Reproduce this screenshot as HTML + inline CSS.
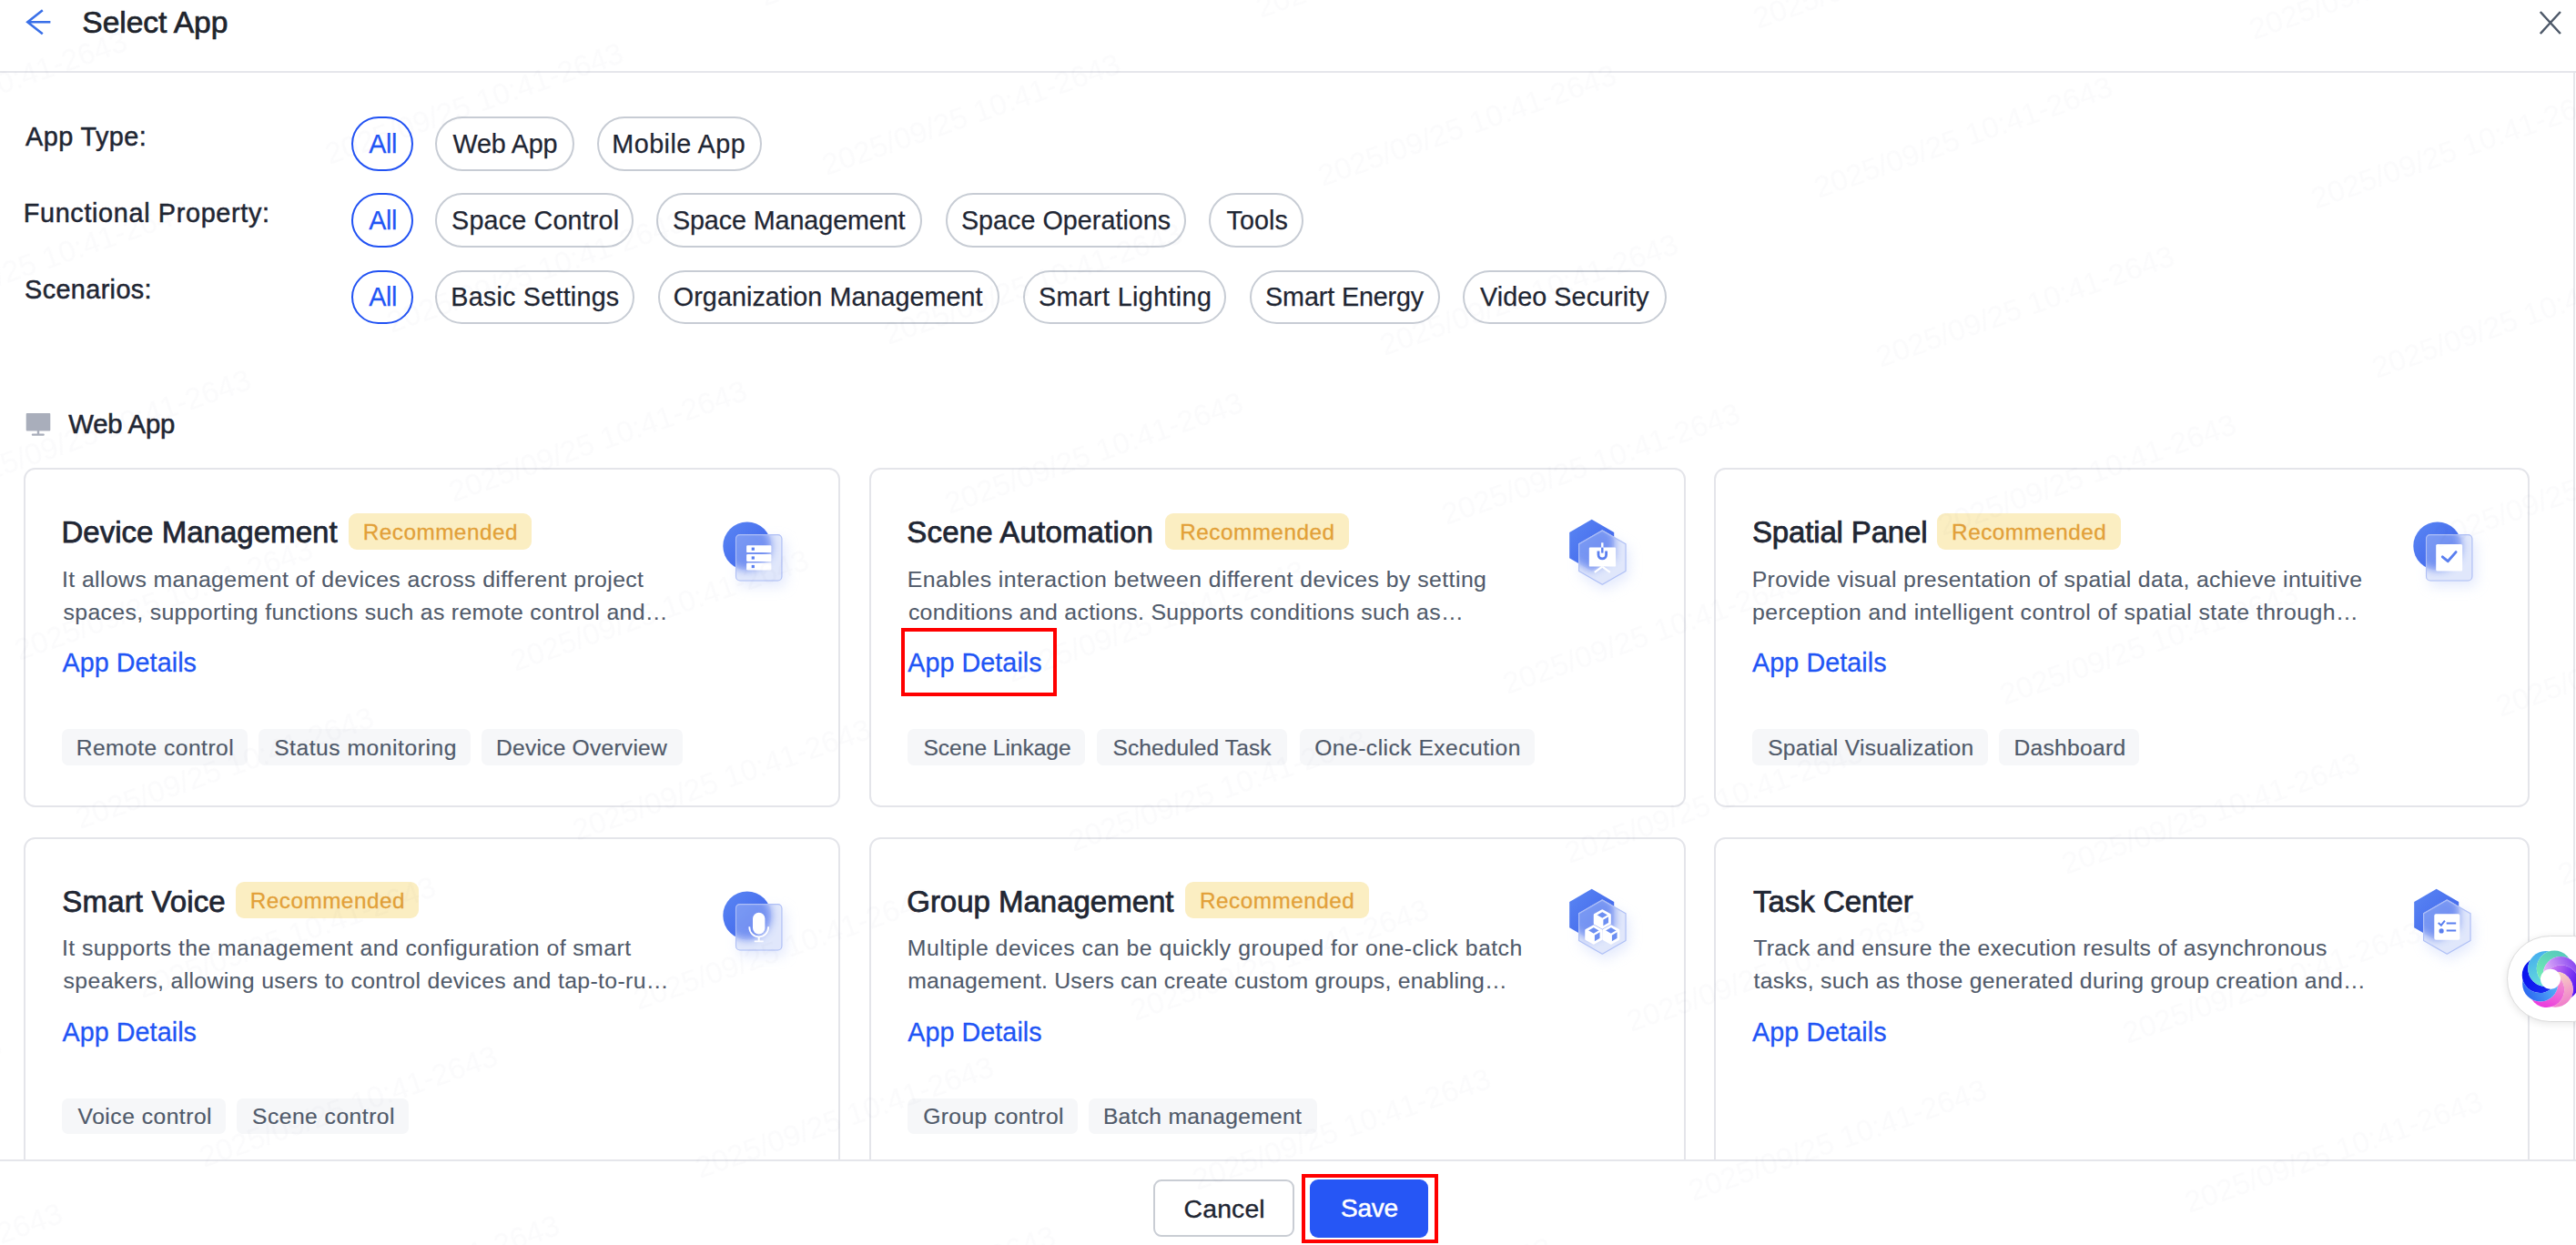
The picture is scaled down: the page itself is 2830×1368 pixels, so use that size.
<!DOCTYPE html><html><head><meta charset="utf-8"><title>Select App</title><style>
html,body{margin:0;padding:0;background:#fff;width:2830px;height:1368px;overflow:hidden;}
body{position:relative;font-family:"Liberation Sans",sans-serif;}
.t{position:absolute;white-space:nowrap;}
.abs{position:absolute;box-sizing:border-box;}
.pill{position:absolute;box-sizing:border-box;border:2px solid #c7ccd4;border-radius:30px;height:59.5px;}
.pill.on{border-color:#2152f3;}
.card{position:absolute;box-sizing:border-box;border:2px solid #e4e5ea;border-radius:12.5px;background:#fff;width:896.7px;height:373px;}
.tag{position:absolute;box-sizing:border-box;background:#f6f7f9;border-radius:7px;height:39.5px;}
.badge{position:absolute;box-sizing:border-box;background:#fbeec2;border-radius:9px;height:40px;}
</style></head><body>
<svg class="abs" style="left:0;top:0" width="80" height="50" viewBox="0 0 80 50"><path d="M46.8 11.2 L30.3 24.2 L46.8 37.2 M30.3 24.2 L55.4 24.2" fill="none" stroke="#3a70e8" stroke-width="2.6"/></svg>
<div class="t" style="left:90.35px;top:8.25px;font-size:33.6px;line-height:33.6px;letter-spacing:-0.055px;color:#20242c;-webkit-text-stroke:0.7px currentColor;">Select App</div>
<svg class="abs" style="left:2780px;top:0" width="50" height="50" viewBox="0 0 50 50"><path d="M10.8 13 L32.9 37 M32.9 13 L10.8 37" fill="none" stroke="#4e5969" stroke-width="2.5"/></svg>
<div class="abs" style="left:0;top:78px;width:2830px;height:2px;background:#e5e6eb"></div>
<div class="abs" style="left:2827px;top:80px;width:2px;height:1195px;background:#e6e7eb"></div>
<div class="t" style="left:28.00px;top:136.32px;font-size:28.8px;line-height:28.8px;letter-spacing:0.452px;color:#1f2633;-webkit-text-stroke:0.5px currentColor;">App Type:</div>
<div class="t" style="left:25.75px;top:219.92px;font-size:28.8px;line-height:28.8px;letter-spacing:0.659px;color:#1f2633;-webkit-text-stroke:0.5px currentColor;">Functional Property:</div>
<div class="t" style="left:27.10px;top:303.62px;font-size:28.8px;line-height:28.8px;letter-spacing:0.381px;color:#1f2633;-webkit-text-stroke:0.5px currentColor;">Scenarios:</div>
<div class="pill on" style="left:386.2px;top:128.3px;width:67.4px;"></div>
<div class="t" style="left:405.20px;top:143.70px;font-size:28.7px;line-height:28.7px;letter-spacing:-0.402px;color:#1f55f5;-webkit-text-stroke:0.25px currentColor;">All</div>
<div class="pill" style="left:478.2px;top:128.3px;width:153.1px;"></div>
<div class="t" style="left:497.50px;top:143.70px;font-size:28.7px;line-height:28.7px;letter-spacing:-0.145px;color:#1f2633;-webkit-text-stroke:0.25px currentColor;">Web App</div>
<div class="pill" style="left:656.2px;top:128.3px;width:180.8px;"></div>
<div class="t" style="left:672.36px;top:143.70px;font-size:28.7px;line-height:28.7px;letter-spacing:0.480px;color:#1f2633;-webkit-text-stroke:0.25px currentColor;">Mobile App</div>
<div class="pill on" style="left:386.2px;top:212.4px;width:67.4px;"></div>
<div class="t" style="left:405.20px;top:227.70px;font-size:28.7px;line-height:28.7px;letter-spacing:-0.402px;color:#1f55f5;-webkit-text-stroke:0.25px currentColor;">All</div>
<div class="pill" style="left:478.2px;top:212.4px;width:218.2px;"></div>
<div class="t" style="left:496.10px;top:227.70px;font-size:28.7px;line-height:28.7px;letter-spacing:0.185px;color:#1f2633;-webkit-text-stroke:0.25px currentColor;">Space Control</div>
<div class="pill" style="left:721.4px;top:212.4px;width:291.8px;"></div>
<div class="t" style="left:738.90px;top:227.70px;font-size:28.7px;line-height:28.7px;letter-spacing:-0.071px;color:#1f2633;-webkit-text-stroke:0.25px currentColor;">Space Management</div>
<div class="pill" style="left:1038.6px;top:212.4px;width:264.3px;"></div>
<div class="t" style="left:1055.90px;top:227.70px;font-size:28.7px;line-height:28.7px;letter-spacing:0.044px;color:#1f2633;-webkit-text-stroke:0.25px currentColor;">Space Operations</div>
<div class="pill" style="left:1328.3px;top:212.4px;width:104.0px;"></div>
<div class="t" style="left:1347.55px;top:227.70px;font-size:28.7px;line-height:28.7px;letter-spacing:0.086px;color:#1f2633;-webkit-text-stroke:0.25px currentColor;">Tools</div>
<div class="pill on" style="left:386.2px;top:296.5px;width:67.4px;"></div>
<div class="t" style="left:405.20px;top:311.80px;font-size:28.7px;line-height:28.7px;letter-spacing:-0.402px;color:#1f55f5;-webkit-text-stroke:0.25px currentColor;">All</div>
<div class="pill" style="left:478.2px;top:296.5px;width:219.1px;"></div>
<div class="t" style="left:495.26px;top:311.80px;font-size:28.7px;line-height:28.7px;letter-spacing:0.245px;color:#1f2633;-webkit-text-stroke:0.25px currentColor;">Basic Settings</div>
<div class="pill" style="left:722.8px;top:296.5px;width:374.9px;"></div>
<div class="t" style="left:739.85px;top:311.80px;font-size:28.7px;line-height:28.7px;letter-spacing:0.074px;color:#1f2633;-webkit-text-stroke:0.25px currentColor;">Organization Management</div>
<div class="pill" style="left:1123.7px;top:296.5px;width:223.4px;"></div>
<div class="t" style="left:1141.00px;top:311.80px;font-size:28.7px;line-height:28.7px;letter-spacing:0.374px;color:#1f2633;-webkit-text-stroke:0.25px currentColor;">Smart Lighting</div>
<div class="pill" style="left:1372.9px;top:296.5px;width:209.5px;"></div>
<div class="t" style="left:1390.10px;top:311.80px;font-size:28.7px;line-height:28.7px;letter-spacing:-0.114px;color:#1f2633;-webkit-text-stroke:0.25px currentColor;">Smart Energy</div>
<div class="pill" style="left:1607.1px;top:296.5px;width:223.8px;"></div>
<div class="t" style="left:1626.00px;top:311.80px;font-size:28.7px;line-height:28.7px;letter-spacing:0.090px;color:#1f2633;-webkit-text-stroke:0.25px currentColor;">Video Security</div>
<svg class="abs" style="left:28px;top:453px" width="30" height="28" viewBox="0 0 30 28"><rect x="0.7" y="1" width="26.6" height="19.6" rx="1" fill="#a9aebb"/><rect x="12.8" y="20" width="2.4" height="4.5" fill="#a9aebb"/><rect x="6.8" y="23.6" width="14" height="2.2" rx="1" fill="#a9aebb"/></svg>
<div class="t" style="left:75.30px;top:451.49px;font-size:29.3px;line-height:29.3px;letter-spacing:-0.234px;color:#1f2633;-webkit-text-stroke:0.55px currentColor;">Web App</div>
<div class="card" style="left:26.2px;top:514.0px"></div>
<div class="t" style="left:67.42px;top:568.06px;font-size:33.0px;line-height:33.0px;letter-spacing:0.032px;color:#1f2633;-webkit-text-stroke:0.75px currentColor;">Device Management</div>
<div class="badge" style="left:382.9px;top:563.8px;width:201.5px"></div>
<div class="t" style="left:398.70px;top:572.63px;font-size:24.3px;line-height:24.3px;letter-spacing:0.498px;color:#e2a038;-webkit-text-stroke:0.3px currentColor;">Recommended</div>
<div class="t" style="left:68.06px;top:624.60px;font-size:24.8px;line-height:24.8px;letter-spacing:0.399px;color:#505a6a;-webkit-text-stroke:0.1px currentColor;">It allows management of devices across different project</div>
<div class="t" style="left:69.61px;top:660.80px;font-size:24.8px;line-height:24.8px;letter-spacing:0.344px;color:#505a6a;-webkit-text-stroke:0.1px currentColor;">spaces, supporting functions such as remote control and…</div>
<div class="t" style="left:68.50px;top:714.10px;font-size:28.7px;line-height:28.7px;letter-spacing:0.073px;color:#1f55f5;-webkit-text-stroke:0.3px currentColor;">App Details</div>
<div class="tag" style="left:67.7px;top:801.0px;width:204.1px"></div>
<div class="t" style="left:83.68px;top:809.77px;font-size:24.6px;line-height:24.6px;letter-spacing:0.480px;color:#505a6a;-webkit-text-stroke:0.2px currentColor;">Remote control</div>
<div class="tag" style="left:284.0px;top:801.0px;width:232.7px"></div>
<div class="t" style="left:301.13px;top:809.77px;font-size:24.6px;line-height:24.6px;letter-spacing:0.551px;color:#505a6a;-webkit-text-stroke:0.2px currentColor;">Status monitoring</div>
<div class="tag" style="left:529.0px;top:801.0px;width:220.8px"></div>
<div class="t" style="left:544.98px;top:809.77px;font-size:24.6px;line-height:24.6px;letter-spacing:0.234px;color:#505a6a;-webkit-text-stroke:0.2px currentColor;">Device Overview</div>
<svg class="abs" style="left:766.2px;top:554.0px" width="130" height="110" viewBox="0 0 130 110"><defs>
<linearGradient id="bg0" x1="0" y1="0" x2="1" y2="1"><stop offset="0" stop-color="#5a86f3"/><stop offset="1" stop-color="#3b5fea"/></linearGradient>
<filter id="bl0" x="-50%" y="-50%" width="200%" height="200%"><feGaussianBlur stdDeviation="5"/></filter>
<filter id="gl0" x="-50%" y="-50%" width="200%" height="200%"><feGaussianBlur stdDeviation="7"/></filter>
</defs><rect x="46.0" y="39.1" width="51.4" height="51.4" rx="5" fill="#c9d6fb" opacity="0.5" filter="url(#gl0)"/><circle cx="54.8" cy="46.0" r="26.5" fill="url(#bg0)"/><clipPath id="cp0"><rect x="42.0" y="33.1" width="51.4" height="51.4" rx="5"/></clipPath><rect x="42.0" y="33.1" width="51.4" height="51.4" rx="5" fill="#dfe6fb" fill-opacity="0.92"/><g clip-path="url(#cp0)"><g filter="url(#bl0)" opacity="0.68"><circle cx="54.8" cy="46.0" r="26.5" fill="url(#bg0)"/></g></g><rect x="42.5" y="33.6" width="50.4" height="50.4" rx="4.5" fill="none" stroke="#aebff6" stroke-width="1.1"/><rect x="54.1" y="45.2" width="27.3" height="7.9" rx="1.2" fill="#ffffff"/><rect x="59.7" y="47.6" width="3.2" height="3.2" fill="#5a7ff0"/><rect x="54.1" y="55.0" width="27.3" height="7.9" rx="1.2" fill="#ffffff"/><rect x="59.7" y="57.4" width="3.2" height="3.2" fill="#5a7ff0"/><rect x="54.1" y="64.5" width="27.3" height="7.9" rx="1.2" fill="#ffffff"/><rect x="59.7" y="66.9" width="3.2" height="3.2" fill="#5a7ff0"/></svg>
<div class="card" style="left:954.9px;top:514.0px"></div>
<div class="t" style="left:996.37px;top:568.06px;font-size:33.0px;line-height:33.0px;letter-spacing:0.174px;color:#1f2633;-webkit-text-stroke:0.75px currentColor;">Scene Automation</div>
<div class="badge" style="left:1280.4px;top:563.8px;width:201.5px"></div>
<div class="t" style="left:1296.20px;top:572.63px;font-size:24.3px;line-height:24.3px;letter-spacing:0.498px;color:#e2a038;-webkit-text-stroke:0.3px currentColor;">Recommended</div>
<div class="t" style="left:996.76px;top:624.60px;font-size:24.8px;line-height:24.8px;letter-spacing:0.447px;color:#505a6a;-webkit-text-stroke:0.1px currentColor;">Enables interaction between different devices by setting</div>
<div class="t" style="left:997.92px;top:660.80px;font-size:24.8px;line-height:24.8px;letter-spacing:0.308px;color:#505a6a;-webkit-text-stroke:0.1px currentColor;">conditions and actions. Supports conditions such as…</div>
<div class="t" style="left:997.20px;top:714.10px;font-size:28.7px;line-height:28.7px;letter-spacing:0.073px;color:#1f55f5;-webkit-text-stroke:0.3px currentColor;">App Details</div>
<div class="tag" style="left:997.4px;top:801.0px;width:195.0px"></div>
<div class="t" style="left:1014.53px;top:809.77px;font-size:24.6px;line-height:24.6px;letter-spacing:-0.049px;color:#505a6a;-webkit-text-stroke:0.2px currentColor;">Scene Linkage</div>
<div class="tag" style="left:1205.3px;top:801.0px;width:208.9px"></div>
<div class="t" style="left:1222.43px;top:809.77px;font-size:24.6px;line-height:24.6px;letter-spacing:0.077px;color:#505a6a;-webkit-text-stroke:0.2px currentColor;">Scheduled Task</div>
<div class="tag" style="left:1427.5px;top:801.0px;width:258.2px"></div>
<div class="t" style="left:1444.25px;top:809.77px;font-size:24.6px;line-height:24.6px;letter-spacing:0.486px;color:#505a6a;-webkit-text-stroke:0.2px currentColor;">One-click Execution</div>
<svg class="abs" style="left:1694.9px;top:554.0px" width="130" height="110" viewBox="0 0 130 110"><defs>
<linearGradient id="bg1" x1="0" y1="0" x2="1" y2="1"><stop offset="0" stop-color="#5a86f3"/><stop offset="1" stop-color="#3b5fea"/></linearGradient>
<filter id="bl1" x="-50%" y="-50%" width="200%" height="200%"><feGaussianBlur stdDeviation="5"/></filter>
<filter id="gl1" x="-50%" y="-50%" width="200%" height="200%"><feGaussianBlur stdDeviation="7"/></filter>
</defs><polygon points="68.30,34.40 94.45,49.50 94.45,79.70 68.30,94.80 42.15,79.70 42.15,49.50" fill="#c9d6fb" opacity="0.5" filter="url(#gl1)"/><polygon points="53.70,16.80 78.21,30.95 78.21,59.25 53.70,73.40 29.19,59.25 29.19,30.95" fill="url(#bg1)"/><clipPath id="cp1"><polygon points="65.30,28.40 91.45,43.50 91.45,73.70 65.30,88.80 39.15,73.70 39.15,43.50"/></clipPath><polygon points="65.30,29.40 90.59,44.00 90.59,73.20 65.30,87.80 40.01,73.20 40.01,44.00" fill="#dfe6fb" fill-opacity="0.92" stroke="#dfe6fb" stroke-opacity="0.92" stroke-width="2" stroke-linejoin="round"/><g clip-path="url(#cp1)"><g filter="url(#bl1)" opacity="0.68"><polygon points="53.70,16.80 78.21,30.95 78.21,59.25 53.70,73.40 29.19,59.25 29.19,30.95" fill="url(#bg1)"/></g></g><polygon points="65.30,28.90 91.02,43.75 91.02,73.45 65.30,88.30 39.58,73.45 39.58,43.75" fill="none" stroke="#aebff6" stroke-width="1.1" stroke-linejoin="round"/><rect x="50.8" y="47.6" width="29.3" height="21" rx="1.2" fill="#ffffff"/><rect x="64.1" y="42.3" width="2.4" height="6" fill="#ffffff"/><path d="M61.0 51.6 V55.6 A4.3 4.3 0 0 0 69.6 55.6 V51.6" fill="none" stroke="#5a7ff0" stroke-width="2.8"/><rect x="64.1" y="47.6" width="2.4" height="6" fill="#5a7ff0"/><path d="M65.3 68.6 L56.8 74.9 M65.3 68.6 L73.8 74.9" fill="none" stroke="#ffffff" stroke-width="2.2"/></svg>
<div class="card" style="left:1882.8px;top:514.0px"></div>
<div class="t" style="left:1924.97px;top:568.06px;font-size:33.0px;line-height:33.0px;letter-spacing:-0.155px;color:#1f2633;-webkit-text-stroke:0.75px currentColor;">Spatial Panel</div>
<div class="badge" style="left:2128.3px;top:563.8px;width:201.5px"></div>
<div class="t" style="left:2144.10px;top:572.63px;font-size:24.3px;line-height:24.3px;letter-spacing:0.498px;color:#e2a038;-webkit-text-stroke:0.3px currentColor;">Recommended</div>
<div class="t" style="left:1924.66px;top:624.60px;font-size:24.8px;line-height:24.8px;letter-spacing:0.345px;color:#505a6a;-webkit-text-stroke:0.1px currentColor;">Provide visual presentation of spatial data, achieve intuitive</div>
<div class="t" style="left:1925.05px;top:660.80px;font-size:24.8px;line-height:24.8px;letter-spacing:0.443px;color:#505a6a;-webkit-text-stroke:0.1px currentColor;">perception and intelligent control of spatial state through…</div>
<div class="t" style="left:1925.10px;top:714.10px;font-size:28.7px;line-height:28.7px;letter-spacing:0.073px;color:#1f55f5;-webkit-text-stroke:0.3px currentColor;">App Details</div>
<div class="tag" style="left:1925.0px;top:801.0px;width:258.5px"></div>
<div class="t" style="left:1942.13px;top:809.77px;font-size:24.6px;line-height:24.6px;letter-spacing:0.317px;color:#505a6a;-webkit-text-stroke:0.2px currentColor;">Spatial Visualization</div>
<div class="tag" style="left:2196.4px;top:801.0px;width:154.1px"></div>
<div class="t" style="left:2212.38px;top:809.77px;font-size:24.6px;line-height:24.6px;letter-spacing:0.307px;color:#505a6a;-webkit-text-stroke:0.2px currentColor;">Dashboard</div>
<svg class="abs" style="left:2622.8px;top:554.0px" width="130" height="110" viewBox="0 0 130 110"><defs>
<linearGradient id="bg2" x1="0" y1="0" x2="1" y2="1"><stop offset="0" stop-color="#5a86f3"/><stop offset="1" stop-color="#3b5fea"/></linearGradient>
<filter id="bl2" x="-50%" y="-50%" width="200%" height="200%"><feGaussianBlur stdDeviation="5"/></filter>
<filter id="gl2" x="-50%" y="-50%" width="200%" height="200%"><feGaussianBlur stdDeviation="7"/></filter>
</defs><rect x="46.0" y="39.1" width="51.4" height="51.4" rx="5" fill="#c9d6fb" opacity="0.5" filter="url(#gl2)"/><circle cx="54.8" cy="46.0" r="26.5" fill="url(#bg2)"/><clipPath id="cp2"><rect x="42.0" y="33.1" width="51.4" height="51.4" rx="5"/></clipPath><rect x="42.0" y="33.1" width="51.4" height="51.4" rx="5" fill="#dfe6fb" fill-opacity="0.92"/><g clip-path="url(#cp2)"><g filter="url(#bl2)" opacity="0.68"><circle cx="54.8" cy="46.0" r="26.5" fill="url(#bg2)"/></g></g><rect x="42.5" y="33.6" width="50.4" height="50.4" rx="4.5" fill="none" stroke="#aebff6" stroke-width="1.1"/><rect x="53.2" y="44.1" width="29" height="29.3" rx="1.5" fill="#ffffff"/><path d="M60.3 57.9 L66.2 62.7 L75.1 52.6" fill="none" stroke="#5a7ff0" stroke-width="2.9" stroke-linecap="round" stroke-linejoin="round"/></svg>
<div class="card" style="left:26.2px;top:919.5px"></div>
<div class="t" style="left:68.37px;top:973.56px;font-size:33.0px;line-height:33.0px;letter-spacing:0.146px;color:#1f2633;-webkit-text-stroke:0.75px currentColor;">Smart Voice</div>
<div class="badge" style="left:258.9px;top:969.3px;width:201.5px"></div>
<div class="t" style="left:274.70px;top:978.13px;font-size:24.3px;line-height:24.3px;letter-spacing:0.498px;color:#e2a038;-webkit-text-stroke:0.3px currentColor;">Recommended</div>
<div class="t" style="left:68.06px;top:1030.10px;font-size:24.8px;line-height:24.8px;letter-spacing:0.435px;color:#505a6a;-webkit-text-stroke:0.1px currentColor;">It supports the management and configuration of smart</div>
<div class="t" style="left:69.61px;top:1066.30px;font-size:24.8px;line-height:24.8px;letter-spacing:0.350px;color:#505a6a;-webkit-text-stroke:0.1px currentColor;">speakers, allowing users to control devices and tap-to-ru…</div>
<div class="t" style="left:68.50px;top:1119.60px;font-size:28.7px;line-height:28.7px;letter-spacing:0.073px;color:#1f55f5;-webkit-text-stroke:0.3px currentColor;">App Details</div>
<div class="tag" style="left:67.7px;top:1206.5px;width:180.0px"></div>
<div class="t" style="left:85.60px;top:1215.27px;font-size:24.6px;line-height:24.6px;letter-spacing:0.514px;color:#505a6a;-webkit-text-stroke:0.2px currentColor;">Voice control</div>
<div class="tag" style="left:259.9px;top:1206.5px;width:188.7px"></div>
<div class="t" style="left:277.03px;top:1215.27px;font-size:24.6px;line-height:24.6px;letter-spacing:0.506px;color:#505a6a;-webkit-text-stroke:0.2px currentColor;">Scene control</div>
<svg class="abs" style="left:766.2px;top:959.5px" width="130" height="110" viewBox="0 0 130 110"><defs>
<linearGradient id="bg3" x1="0" y1="0" x2="1" y2="1"><stop offset="0" stop-color="#5a86f3"/><stop offset="1" stop-color="#3b5fea"/></linearGradient>
<filter id="bl3" x="-50%" y="-50%" width="200%" height="200%"><feGaussianBlur stdDeviation="5"/></filter>
<filter id="gl3" x="-50%" y="-50%" width="200%" height="200%"><feGaussianBlur stdDeviation="7"/></filter>
</defs><rect x="46.0" y="39.1" width="51.4" height="51.4" rx="5" fill="#c9d6fb" opacity="0.5" filter="url(#gl3)"/><circle cx="54.8" cy="46.0" r="26.5" fill="url(#bg3)"/><clipPath id="cp3"><rect x="42.0" y="33.1" width="51.4" height="51.4" rx="5"/></clipPath><rect x="42.0" y="33.1" width="51.4" height="51.4" rx="5" fill="#dfe6fb" fill-opacity="0.92"/><g clip-path="url(#cp3)"><g filter="url(#bl3)" opacity="0.68"><circle cx="54.8" cy="46.0" r="26.5" fill="url(#bg3)"/></g></g><rect x="42.5" y="33.6" width="50.4" height="50.4" rx="4.5" fill="none" stroke="#aebff6" stroke-width="1.1"/><rect x="61.0" y="42.7" width="13.4" height="23.7" rx="6.7" fill="#ffffff"/><path d="M57.3 58.2 V59.1 A10.4 10.4 0 0 0 78.1 59.1 V58.2" fill="none" stroke="#ffffff" stroke-width="1.8"/><path d="M67.7 69.4 V74.3 M62.7 74.4 H72.7" fill="none" stroke="#ffffff" stroke-width="1.9"/></svg>
<div class="card" style="left:954.9px;top:919.5px"></div>
<div class="t" style="left:996.25px;top:973.56px;font-size:33.0px;line-height:33.0px;letter-spacing:-0.018px;color:#1f2633;-webkit-text-stroke:0.75px currentColor;">Group Management</div>
<div class="badge" style="left:1302.2px;top:969.3px;width:201.5px"></div>
<div class="t" style="left:1318.00px;top:978.13px;font-size:24.3px;line-height:24.3px;letter-spacing:0.498px;color:#e2a038;-webkit-text-stroke:0.3px currentColor;">Recommended</div>
<div class="t" style="left:996.76px;top:1030.10px;font-size:24.8px;line-height:24.8px;letter-spacing:0.502px;color:#505a6a;-webkit-text-stroke:0.1px currentColor;">Multiple devices can be quickly grouped for one-click batch</div>
<div class="t" style="left:997.15px;top:1066.30px;font-size:24.8px;line-height:24.8px;letter-spacing:0.211px;color:#505a6a;-webkit-text-stroke:0.1px currentColor;">management. Users can create custom groups, enabling…</div>
<div class="t" style="left:997.20px;top:1119.60px;font-size:28.7px;line-height:28.7px;letter-spacing:0.073px;color:#1f55f5;-webkit-text-stroke:0.3px currentColor;">App Details</div>
<div class="tag" style="left:997.4px;top:1206.5px;width:186.2px"></div>
<div class="t" style="left:1014.15px;top:1215.27px;font-size:24.6px;line-height:24.6px;letter-spacing:0.444px;color:#505a6a;-webkit-text-stroke:0.2px currentColor;">Group control</div>
<div class="tag" style="left:1195.9px;top:1206.5px;width:250.8px"></div>
<div class="t" style="left:1211.88px;top:1215.27px;font-size:24.6px;line-height:24.6px;letter-spacing:0.314px;color:#505a6a;-webkit-text-stroke:0.2px currentColor;">Batch management</div>
<svg class="abs" style="left:1694.9px;top:959.5px" width="130" height="110" viewBox="0 0 130 110"><defs>
<linearGradient id="bg4" x1="0" y1="0" x2="1" y2="1"><stop offset="0" stop-color="#5a86f3"/><stop offset="1" stop-color="#3b5fea"/></linearGradient>
<filter id="bl4" x="-50%" y="-50%" width="200%" height="200%"><feGaussianBlur stdDeviation="5"/></filter>
<filter id="gl4" x="-50%" y="-50%" width="200%" height="200%"><feGaussianBlur stdDeviation="7"/></filter>
</defs><polygon points="68.30,34.40 94.45,49.50 94.45,79.70 68.30,94.80 42.15,79.70 42.15,49.50" fill="#c9d6fb" opacity="0.5" filter="url(#gl4)"/><polygon points="53.70,16.80 78.21,30.95 78.21,59.25 53.70,73.40 29.19,59.25 29.19,30.95" fill="url(#bg4)"/><clipPath id="cp4"><polygon points="65.30,28.40 91.45,43.50 91.45,73.70 65.30,88.80 39.15,73.70 39.15,43.50"/></clipPath><polygon points="65.30,29.40 90.59,44.00 90.59,73.20 65.30,87.80 40.01,73.20 40.01,44.00" fill="#dfe6fb" fill-opacity="0.92" stroke="#dfe6fb" stroke-opacity="0.92" stroke-width="2" stroke-linejoin="round"/><g clip-path="url(#cp4)"><g filter="url(#bl4)" opacity="0.68"><polygon points="53.70,16.80 78.21,30.95 78.21,59.25 53.70,73.40 29.19,59.25 29.19,30.95" fill="url(#bg4)"/></g></g><polygon points="65.30,28.90 91.02,43.75 91.02,73.45 65.30,88.30 39.58,73.45 39.58,43.75" fill="none" stroke="#aebff6" stroke-width="1.1" stroke-linejoin="round"/><polygon points="65.30,40.60 73.44,45.30 73.44,54.70 65.30,59.40 57.16,54.70 57.16,45.30" fill="#6d8ff2" stroke="#ffffff" stroke-width="2.8" stroke-linejoin="round"/><polygon points="57.2,45.3 65.3,50.0 65.3,59.4 57.2,54.7" fill="#ffffff"/><path d="M57.2 45.3 L65.3 50.0 L73.4 45.3 M65.3 50.0 V59.4" fill="none" stroke="#ffffff" stroke-width="2.2"/><polygon points="55.80,57.60 63.94,62.30 63.94,71.70 55.80,76.40 47.66,71.70 47.66,62.30" fill="#6d8ff2" stroke="#ffffff" stroke-width="2.8" stroke-linejoin="round"/><polygon points="47.7,62.3 55.8,67.0 55.8,76.4 47.7,71.7" fill="#ffffff"/><path d="M47.7 62.3 L55.8 67.0 L63.9 62.3 M55.8 67.0 V76.4" fill="none" stroke="#ffffff" stroke-width="2.2"/><polygon points="74.80,57.60 82.94,62.30 82.94,71.70 74.80,76.40 66.66,71.70 66.66,62.30" fill="#6d8ff2" stroke="#ffffff" stroke-width="2.8" stroke-linejoin="round"/><polygon points="66.7,62.3 74.8,67.0 74.8,76.4 66.7,71.7" fill="#ffffff"/><path d="M66.7 62.3 L74.8 67.0 L82.9 62.3 M74.8 67.0 V76.4" fill="none" stroke="#ffffff" stroke-width="2.2"/></svg>
<div class="card" style="left:1882.8px;top:919.5px"></div>
<div class="t" style="left:1926.08px;top:973.56px;font-size:33.0px;line-height:33.0px;letter-spacing:-0.029px;color:#1f2633;-webkit-text-stroke:0.75px currentColor;">Task Center</div>
<div class="t" style="left:1926.21px;top:1030.10px;font-size:24.8px;line-height:24.8px;letter-spacing:0.281px;color:#505a6a;-webkit-text-stroke:0.1px currentColor;">Track and ensure the execution results of asynchronous</div>
<div class="t" style="left:1926.60px;top:1066.30px;font-size:24.8px;line-height:24.8px;letter-spacing:0.262px;color:#505a6a;-webkit-text-stroke:0.1px currentColor;">tasks, such as those generated during group creation and…</div>
<div class="t" style="left:1925.10px;top:1119.60px;font-size:28.7px;line-height:28.7px;letter-spacing:0.073px;color:#1f55f5;-webkit-text-stroke:0.3px currentColor;">App Details</div>
<svg class="abs" style="left:2622.8px;top:959.5px" width="130" height="110" viewBox="0 0 130 110"><defs>
<linearGradient id="bg5" x1="0" y1="0" x2="1" y2="1"><stop offset="0" stop-color="#5a86f3"/><stop offset="1" stop-color="#3b5fea"/></linearGradient>
<filter id="bl5" x="-50%" y="-50%" width="200%" height="200%"><feGaussianBlur stdDeviation="5"/></filter>
<filter id="gl5" x="-50%" y="-50%" width="200%" height="200%"><feGaussianBlur stdDeviation="7"/></filter>
</defs><polygon points="68.30,34.40 94.45,49.50 94.45,79.70 68.30,94.80 42.15,79.70 42.15,49.50" fill="#c9d6fb" opacity="0.5" filter="url(#gl5)"/><polygon points="53.70,16.80 78.21,30.95 78.21,59.25 53.70,73.40 29.19,59.25 29.19,30.95" fill="url(#bg5)"/><clipPath id="cp5"><polygon points="65.30,28.40 91.45,43.50 91.45,73.70 65.30,88.80 39.15,73.70 39.15,43.50"/></clipPath><polygon points="65.30,29.40 90.59,44.00 90.59,73.20 65.30,87.80 40.01,73.20 40.01,44.00" fill="#dfe6fb" fill-opacity="0.92" stroke="#dfe6fb" stroke-opacity="0.92" stroke-width="2" stroke-linejoin="round"/><g clip-path="url(#cp5)"><g filter="url(#bl5)" opacity="0.68"><polygon points="53.70,16.80 78.21,30.95 78.21,59.25 53.70,73.40 29.19,59.25 29.19,30.95" fill="url(#bg5)"/></g></g><polygon points="65.30,28.90 91.02,43.75 91.02,73.45 65.30,88.30 39.58,73.45 39.58,43.75" fill="none" stroke="#aebff6" stroke-width="1.1" stroke-linejoin="round"/><rect x="51.3" y="44.3" width="28.1" height="28.4" rx="1.8" fill="#ffffff"/><path d="M55.7 54.0 L58.9 56.7 L62.9 51.7" fill="none" stroke="#5a7ff0" stroke-width="2"/><rect x="64.7" y="53.5" width="10.5" height="2" fill="#5a7ff0"/><circle cx="59.1" cy="62.9" r="2.6" fill="#5a7ff0"/><rect x="64.7" y="61.5" width="10.5" height="2" fill="#5a7ff0"/></svg>
<div class="abs" style="left:0;top:1274px;width:2830px;height:94px;background:#fff"></div>
<div class="abs" style="left:0;top:1274px;width:2830px;height:2px;background:#e5e6eb"></div>
<div class="abs" style="left:1267.2px;top:1296.1px;width:155.2px;height:63.2px;border:2px solid #c9cdd4;border-radius:9px;background:#fff"></div>
<div class="t" style="left:1300.57px;top:1313.95px;font-size:28.4px;line-height:28.4px;letter-spacing:0.140px;color:#1f2633;-webkit-text-stroke:0.35px currentColor;">Cancel</div>
<div class="abs" style="left:1438.7px;top:1295.8px;width:130.4px;height:63.9px;border-radius:9px;background:#2656f5"></div>
<div class="t" style="left:1473.12px;top:1314.29px;font-size:28.0px;line-height:28.0px;letter-spacing:-0.304px;color:#ffffff;-webkit-text-stroke:0.5px currentColor;">Save</div>
<div class="abs" style="left:1430px;top:1289.8px;width:149.6px;height:75.9px;border:4px solid #ff0000"></div>
<div class="abs" style="left:990px;top:690px;width:171.1px;height:75.3px;border:4px solid #ff0000"></div>
<div class="abs" style="left:2753.6px;top:1027.8px;width:120px;height:95.6px;border-radius:48px;background:#fff;border:1px solid #dcdcdc;box-shadow:0 2px 9px rgba(0,0,0,0.10)"></div>
<svg class="abs" style="left:2762px;top:1036px" width="68" height="80" viewBox="0 0 68 80"><defs><linearGradient id="pg0" gradientUnits="userSpaceOnUse" x1="47.5" y1="42.5" x2="9.9" y2="28.9"><stop offset="0" stop-color="#1a2ff2"/><stop offset="1" stop-color="#0a12ee"/></linearGradient><linearGradient id="pg1" gradientUnits="userSpaceOnUse" x1="43.4" y1="47.1" x2="26.5" y2="10.8"><stop offset="0" stop-color="#6ae6d6"/><stop offset="1" stop-color="#48b0ee"/></linearGradient><linearGradient id="pg2" gradientUnits="userSpaceOnUse" x1="37.3" y1="47.3" x2="50.9" y2="9.7"><stop offset="0" stop-color="#78f4b4"/><stop offset="1" stop-color="#58cabc"/></linearGradient><linearGradient id="pg3" gradientUnits="userSpaceOnUse" x1="32.7" y1="43.2" x2="69.0" y2="26.3"><stop offset="0" stop-color="#f4c8fa"/><stop offset="1" stop-color="#8a48f0"/></linearGradient><linearGradient id="pg4" gradientUnits="userSpaceOnUse" x1="32.5" y1="37.1" x2="70.1" y2="50.7"><stop offset="0" stop-color="#e08af2"/><stop offset="1" stop-color="#5010f2"/></linearGradient><linearGradient id="pg5" gradientUnits="userSpaceOnUse" x1="36.6" y1="32.5" x2="53.5" y2="68.8"><stop offset="0" stop-color="#f8e2c0"/><stop offset="1" stop-color="#f080cc"/></linearGradient><linearGradient id="pg6" gradientUnits="userSpaceOnUse" x1="42.7" y1="32.3" x2="29.1" y2="69.9"><stop offset="0" stop-color="#f2a0cc"/><stop offset="1" stop-color="#ec3ade"/></linearGradient><linearGradient id="pg7" gradientUnits="userSpaceOnUse" x1="47.3" y1="36.4" x2="11.0" y2="53.3"><stop offset="0" stop-color="#5cbaf8"/><stop offset="1" stop-color="#2c68f0"/></linearGradient><mask id="pm0" maskUnits="userSpaceOnUse" x="0" y="0" width="68" height="80"><rect width="68" height="80" fill="#fff"/><circle cx="34.72" cy="28.47" r="19.5" fill="#000"/><circle cx="44.28" cy="28.05" r="19.5" fill="#000"/><circle cx="51.33" cy="34.52" r="19.5" fill="#000"/></mask><mask id="pm1" maskUnits="userSpaceOnUse" x="0" y="0" width="68" height="80"><rect width="68" height="80" fill="#fff"/><circle cx="44.28" cy="28.05" r="19.5" fill="#000"/><circle cx="51.33" cy="34.52" r="19.5" fill="#000"/><circle cx="51.75" cy="44.08" r="19.5" fill="#000"/></mask><mask id="pm2" maskUnits="userSpaceOnUse" x="0" y="0" width="68" height="80"><rect width="68" height="80" fill="#fff"/><circle cx="51.33" cy="34.52" r="19.5" fill="#000"/><circle cx="51.75" cy="44.08" r="19.5" fill="#000"/><circle cx="45.28" cy="51.13" r="19.5" fill="#000"/></mask><mask id="pm3" maskUnits="userSpaceOnUse" x="0" y="0" width="68" height="80"><rect width="68" height="80" fill="#fff"/><circle cx="51.75" cy="44.08" r="19.5" fill="#000"/><circle cx="45.28" cy="51.13" r="19.5" fill="#000"/><circle cx="35.72" cy="51.55" r="19.5" fill="#000"/></mask><mask id="pm4" maskUnits="userSpaceOnUse" x="0" y="0" width="68" height="80"><rect width="68" height="80" fill="#fff"/><circle cx="45.28" cy="51.13" r="19.5" fill="#000"/><circle cx="35.72" cy="51.55" r="19.5" fill="#000"/><circle cx="28.67" cy="45.08" r="19.5" fill="#000"/></mask><mask id="pm5" maskUnits="userSpaceOnUse" x="0" y="0" width="68" height="80"><rect width="68" height="80" fill="#fff"/><circle cx="35.72" cy="51.55" r="19.5" fill="#000"/><circle cx="28.67" cy="45.08" r="19.5" fill="#000"/><circle cx="28.25" cy="35.52" r="19.5" fill="#000"/></mask><mask id="pm6" maskUnits="userSpaceOnUse" x="0" y="0" width="68" height="80"><rect width="68" height="80" fill="#fff"/><circle cx="28.67" cy="45.08" r="19.5" fill="#000"/><circle cx="28.25" cy="35.52" r="19.5" fill="#000"/><circle cx="34.72" cy="28.47" r="19.5" fill="#000"/></mask><mask id="pm7" maskUnits="userSpaceOnUse" x="0" y="0" width="68" height="80"><rect width="68" height="80" fill="#fff"/><circle cx="28.25" cy="35.52" r="19.5" fill="#000"/><circle cx="34.72" cy="28.47" r="19.5" fill="#000"/><circle cx="44.28" cy="28.05" r="19.5" fill="#000"/></mask></defs><g mask="url(#pm0)"><circle cx="28.25" cy="35.52" r="19.5" fill="url(#pg0)"/></g><g mask="url(#pm1)"><circle cx="34.72" cy="28.47" r="19.5" fill="url(#pg1)"/></g><g mask="url(#pm2)"><circle cx="44.28" cy="28.05" r="19.5" fill="url(#pg2)"/></g><g mask="url(#pm3)"><circle cx="51.33" cy="34.52" r="19.5" fill="url(#pg3)"/></g><g mask="url(#pm4)"><circle cx="51.75" cy="44.08" r="19.5" fill="url(#pg4)"/></g><g mask="url(#pm5)"><circle cx="45.28" cy="51.13" r="19.5" fill="url(#pg5)"/></g><g mask="url(#pm6)"><circle cx="35.72" cy="51.55" r="19.5" fill="url(#pg6)"/></g><g mask="url(#pm7)"><circle cx="28.67" cy="45.08" r="19.5" fill="url(#pg7)"/></g><circle cx="40.0" cy="39.8" r="11" fill="#fff"/></svg>
<div class="abs" style="left:0;top:0;width:2830px;height:1368px;overflow:hidden;pointer-events:none;mix-blend-mode:multiply"><div class="t" style="left:-389.2px;top:1056.7px;font-size:33.3px;line-height:33.3px;color:#fbfbfc;transform-origin:0 28.20px;transform:rotate(-19.2deg)">2025/09/25 10:41-2643</div><div class="t" style="left:-321.4px;top:1242.5px;font-size:33.3px;line-height:33.3px;color:#fbfbfc;transform-origin:0 28.20px;transform:rotate(-19.2deg)">2025/09/25 10:41-2643</div><div class="t" style="left:-253.6px;top:1428.3px;font-size:33.3px;line-height:33.3px;color:#fbfbfc;transform-origin:0 28.20px;transform:rotate(-19.2deg)">2025/09/25 10:41-2643</div><div class="t" style="left:-250.7px;top:-45.7px;font-size:33.3px;line-height:33.3px;color:#fbfbfc;transform-origin:0 28.20px;transform:rotate(-19.2deg)">2025/09/25 10:41-2643</div><div class="t" style="left:-182.9px;top:140.1px;font-size:33.3px;line-height:33.3px;color:#fbfbfc;transform-origin:0 28.20px;transform:rotate(-19.2deg)">2025/09/25 10:41-2643</div><div class="t" style="left:-115.1px;top:325.9px;font-size:33.3px;line-height:33.3px;color:#fbfbfc;transform-origin:0 28.20px;transform:rotate(-19.2deg)">2025/09/25 10:41-2643</div><div class="t" style="left:-47.3px;top:511.7px;font-size:33.3px;line-height:33.3px;color:#fbfbfc;transform-origin:0 28.20px;transform:rotate(-19.2deg)">2025/09/25 10:41-2643</div><div class="t" style="left:20.5px;top:697.5px;font-size:33.3px;line-height:33.3px;color:#fbfbfc;transform-origin:0 28.20px;transform:rotate(-19.2deg)">2025/09/25 10:41-2643</div><div class="t" style="left:88.3px;top:883.3px;font-size:33.3px;line-height:33.3px;color:#fbfbfc;transform-origin:0 28.20px;transform:rotate(-19.2deg)">2025/09/25 10:41-2643</div><div class="t" style="left:156.1px;top:1069.1px;font-size:33.3px;line-height:33.3px;color:#fbfbfc;transform-origin:0 28.20px;transform:rotate(-19.2deg)">2025/09/25 10:41-2643</div><div class="t" style="left:223.9px;top:1254.9px;font-size:33.3px;line-height:33.3px;color:#fbfbfc;transform-origin:0 28.20px;transform:rotate(-19.2deg)">2025/09/25 10:41-2643</div><div class="t" style="left:291.7px;top:1440.7px;font-size:33.3px;line-height:33.3px;color:#fbfbfc;transform-origin:0 28.20px;transform:rotate(-19.2deg)">2025/09/25 10:41-2643</div><div class="t" style="left:294.6px;top:-33.3px;font-size:33.3px;line-height:33.3px;color:#fbfbfc;transform-origin:0 28.20px;transform:rotate(-19.2deg)">2025/09/25 10:41-2643</div><div class="t" style="left:362.4px;top:152.5px;font-size:33.3px;line-height:33.3px;color:#fbfbfc;transform-origin:0 28.20px;transform:rotate(-19.2deg)">2025/09/25 10:41-2643</div><div class="t" style="left:430.2px;top:338.3px;font-size:33.3px;line-height:33.3px;color:#fbfbfc;transform-origin:0 28.20px;transform:rotate(-19.2deg)">2025/09/25 10:41-2643</div><div class="t" style="left:498.0px;top:524.1px;font-size:33.3px;line-height:33.3px;color:#fbfbfc;transform-origin:0 28.20px;transform:rotate(-19.2deg)">2025/09/25 10:41-2643</div><div class="t" style="left:565.8px;top:709.9px;font-size:33.3px;line-height:33.3px;color:#fbfbfc;transform-origin:0 28.20px;transform:rotate(-19.2deg)">2025/09/25 10:41-2643</div><div class="t" style="left:633.6px;top:895.7px;font-size:33.3px;line-height:33.3px;color:#fbfbfc;transform-origin:0 28.20px;transform:rotate(-19.2deg)">2025/09/25 10:41-2643</div><div class="t" style="left:701.4px;top:1081.5px;font-size:33.3px;line-height:33.3px;color:#fbfbfc;transform-origin:0 28.20px;transform:rotate(-19.2deg)">2025/09/25 10:41-2643</div><div class="t" style="left:769.2px;top:1267.3px;font-size:33.3px;line-height:33.3px;color:#fbfbfc;transform-origin:0 28.20px;transform:rotate(-19.2deg)">2025/09/25 10:41-2643</div><div class="t" style="left:837.0px;top:1453.1px;font-size:33.3px;line-height:33.3px;color:#fbfbfc;transform-origin:0 28.20px;transform:rotate(-19.2deg)">2025/09/25 10:41-2643</div><div class="t" style="left:839.9px;top:-20.9px;font-size:33.3px;line-height:33.3px;color:#fbfbfc;transform-origin:0 28.20px;transform:rotate(-19.2deg)">2025/09/25 10:41-2643</div><div class="t" style="left:907.7px;top:164.9px;font-size:33.3px;line-height:33.3px;color:#fbfbfc;transform-origin:0 28.20px;transform:rotate(-19.2deg)">2025/09/25 10:41-2643</div><div class="t" style="left:975.5px;top:350.7px;font-size:33.3px;line-height:33.3px;color:#fbfbfc;transform-origin:0 28.20px;transform:rotate(-19.2deg)">2025/09/25 10:41-2643</div><div class="t" style="left:1043.3px;top:536.5px;font-size:33.3px;line-height:33.3px;color:#fbfbfc;transform-origin:0 28.20px;transform:rotate(-19.2deg)">2025/09/25 10:41-2643</div><div class="t" style="left:1111.1px;top:722.3px;font-size:33.3px;line-height:33.3px;color:#fbfbfc;transform-origin:0 28.20px;transform:rotate(-19.2deg)">2025/09/25 10:41-2643</div><div class="t" style="left:1178.9px;top:908.1px;font-size:33.3px;line-height:33.3px;color:#fbfbfc;transform-origin:0 28.20px;transform:rotate(-19.2deg)">2025/09/25 10:41-2643</div><div class="t" style="left:1246.7px;top:1093.9px;font-size:33.3px;line-height:33.3px;color:#fbfbfc;transform-origin:0 28.20px;transform:rotate(-19.2deg)">2025/09/25 10:41-2643</div><div class="t" style="left:1314.5px;top:1279.7px;font-size:33.3px;line-height:33.3px;color:#fbfbfc;transform-origin:0 28.20px;transform:rotate(-19.2deg)">2025/09/25 10:41-2643</div><div class="t" style="left:1382.3px;top:1465.5px;font-size:33.3px;line-height:33.3px;color:#fbfbfc;transform-origin:0 28.20px;transform:rotate(-19.2deg)">2025/09/25 10:41-2643</div><div class="t" style="left:1385.2px;top:-8.5px;font-size:33.3px;line-height:33.3px;color:#fbfbfc;transform-origin:0 28.20px;transform:rotate(-19.2deg)">2025/09/25 10:41-2643</div><div class="t" style="left:1453.0px;top:177.3px;font-size:33.3px;line-height:33.3px;color:#fbfbfc;transform-origin:0 28.20px;transform:rotate(-19.2deg)">2025/09/25 10:41-2643</div><div class="t" style="left:1520.8px;top:363.1px;font-size:33.3px;line-height:33.3px;color:#fbfbfc;transform-origin:0 28.20px;transform:rotate(-19.2deg)">2025/09/25 10:41-2643</div><div class="t" style="left:1588.6px;top:548.9px;font-size:33.3px;line-height:33.3px;color:#fbfbfc;transform-origin:0 28.20px;transform:rotate(-19.2deg)">2025/09/25 10:41-2643</div><div class="t" style="left:1656.4px;top:734.7px;font-size:33.3px;line-height:33.3px;color:#fbfbfc;transform-origin:0 28.20px;transform:rotate(-19.2deg)">2025/09/25 10:41-2643</div><div class="t" style="left:1724.2px;top:920.5px;font-size:33.3px;line-height:33.3px;color:#fbfbfc;transform-origin:0 28.20px;transform:rotate(-19.2deg)">2025/09/25 10:41-2643</div><div class="t" style="left:1792.0px;top:1106.3px;font-size:33.3px;line-height:33.3px;color:#fbfbfc;transform-origin:0 28.20px;transform:rotate(-19.2deg)">2025/09/25 10:41-2643</div><div class="t" style="left:1859.8px;top:1292.1px;font-size:33.3px;line-height:33.3px;color:#fbfbfc;transform-origin:0 28.20px;transform:rotate(-19.2deg)">2025/09/25 10:41-2643</div><div class="t" style="left:1930.5px;top:3.9px;font-size:33.3px;line-height:33.3px;color:#fbfbfc;transform-origin:0 28.20px;transform:rotate(-19.2deg)">2025/09/25 10:41-2643</div><div class="t" style="left:1998.3px;top:189.7px;font-size:33.3px;line-height:33.3px;color:#fbfbfc;transform-origin:0 28.20px;transform:rotate(-19.2deg)">2025/09/25 10:41-2643</div><div class="t" style="left:2066.1px;top:375.5px;font-size:33.3px;line-height:33.3px;color:#fbfbfc;transform-origin:0 28.20px;transform:rotate(-19.2deg)">2025/09/25 10:41-2643</div><div class="t" style="left:2133.9px;top:561.3px;font-size:33.3px;line-height:33.3px;color:#fbfbfc;transform-origin:0 28.20px;transform:rotate(-19.2deg)">2025/09/25 10:41-2643</div><div class="t" style="left:2201.7px;top:747.1px;font-size:33.3px;line-height:33.3px;color:#fbfbfc;transform-origin:0 28.20px;transform:rotate(-19.2deg)">2025/09/25 10:41-2643</div><div class="t" style="left:2269.5px;top:932.9px;font-size:33.3px;line-height:33.3px;color:#fbfbfc;transform-origin:0 28.20px;transform:rotate(-19.2deg)">2025/09/25 10:41-2643</div><div class="t" style="left:2337.3px;top:1118.7px;font-size:33.3px;line-height:33.3px;color:#fbfbfc;transform-origin:0 28.20px;transform:rotate(-19.2deg)">2025/09/25 10:41-2643</div><div class="t" style="left:2405.1px;top:1304.5px;font-size:33.3px;line-height:33.3px;color:#fbfbfc;transform-origin:0 28.20px;transform:rotate(-19.2deg)">2025/09/25 10:41-2643</div><div class="t" style="left:2475.8px;top:16.3px;font-size:33.3px;line-height:33.3px;color:#fbfbfc;transform-origin:0 28.20px;transform:rotate(-19.2deg)">2025/09/25 10:41-2643</div><div class="t" style="left:2543.6px;top:202.1px;font-size:33.3px;line-height:33.3px;color:#fbfbfc;transform-origin:0 28.20px;transform:rotate(-19.2deg)">2025/09/25 10:41-2643</div><div class="t" style="left:2611.4px;top:387.9px;font-size:33.3px;line-height:33.3px;color:#fbfbfc;transform-origin:0 28.20px;transform:rotate(-19.2deg)">2025/09/25 10:41-2643</div><div class="t" style="left:2679.2px;top:573.7px;font-size:33.3px;line-height:33.3px;color:#fbfbfc;transform-origin:0 28.20px;transform:rotate(-19.2deg)">2025/09/25 10:41-2643</div><div class="t" style="left:2747.0px;top:759.5px;font-size:33.3px;line-height:33.3px;color:#fbfbfc;transform-origin:0 28.20px;transform:rotate(-19.2deg)">2025/09/25 10:41-2643</div><div class="t" style="left:2814.8px;top:945.3px;font-size:33.3px;line-height:33.3px;color:#fbfbfc;transform-origin:0 28.20px;transform:rotate(-19.2deg)">2025/09/25 10:41-2643</div><div class="t" style="left:2882.6px;top:1131.1px;font-size:33.3px;line-height:33.3px;color:#fbfbfc;transform-origin:0 28.20px;transform:rotate(-19.2deg)">2025/09/25 10:41-2643</div></div>
</body></html>
